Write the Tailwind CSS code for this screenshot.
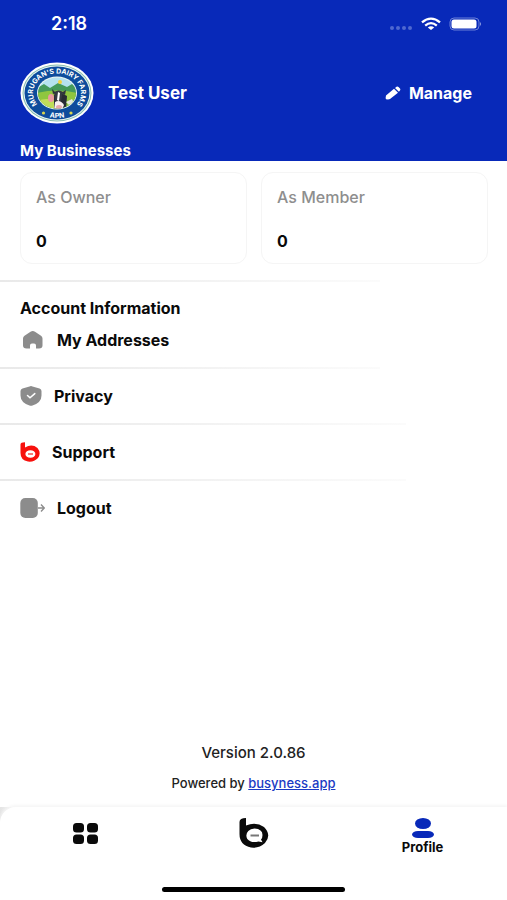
<!DOCTYPE html>
<html lang="en">
<head>
  <meta charset="UTF-8" />
  <meta name="viewport" content="width=device-width, initial-scale=1.0" />
  <title>Profile</title>
  <script src="https://cdn.jsdelivr.net/npm/@tailwindcss/browser@4"></script>
</head>
<body class="min-h-screen flex flex-col bg-white text-[#0a0a0a] text-base leading-5 font-['Inter',sans-serif]">

  <!-- Header -->
  <header class="bg-[#0829b9] text-white">
    <!-- Status bar -->
    <div class="flex items-center justify-between pl-[51px] pr-[26px] pt-3 h-9">
      <span class="text-lg font-semibold">2:18</span>
      <div class="flex items-center gap-2">
        <svg class="w-6 h-4" viewBox="0 0 24 16" fill="#4f68d0">
          <circle cx="3" cy="12" r="2" /><circle cx="9" cy="12" r="2" /><circle cx="15" cy="12" r="2" /><circle cx="21" cy="12" r="2" />
        </svg>
        <svg class="w-5 h-4" viewBox="0 0 20 16" fill="none" stroke="#fff" stroke-width="2.3">
          <path d="M1 6.4Q10-1.2 19 6.4" />
          <path d="M4.2 9.6Q10 4.6 15.8 9.6" />
          <path d="M10 14L6.8 11.6Q10 9 13.2 11.6Z" fill="#fff" stroke="none" />
        </svg>
        <svg class="w-8 h-4" viewBox="0 0 32 16" fill="none">
          <rect x="1" y="2" width="29" height="12" rx="4" stroke="#6b80d8" />
          <rect x="2.5" y="3.5" width="25" height="9" rx="2.5" fill="#fff" />
          <path d="M31 6Q33 8 31 10Z" fill="#8c9de2" />
        </svg>
      </div>
    </div>

    <!-- User -->
    <div class="flex items-center justify-between pl-5 pr-[35px] pt-[26px]">
      <div class="flex items-center gap-[14px]">
        <svg class="w-[74px] h-[62px]" viewBox="0 0 74 62" role="img" aria-label="Murugan's Dairy Farms APN">
          <defs>
            <path id="ringTop" d="M23.3 47A24 19.5 0 1 1 50.7 47" />
            <path id="ringBottom" d="M23 53.5Q37 58.5 51 53.5" />
            <clipPath id="scene"><ellipse cx="37" cy="31" rx="19" ry="15.5" /></clipPath>
          </defs>
          <ellipse cx="37" cy="31" rx="36.5" ry="30.5" fill="#fff" />
          <ellipse cx="37" cy="31" rx="34.5" ry="28.5" fill="#86bdb0" />
          <ellipse cx="37" cy="31" rx="33.5" ry="27.5" fill="#e9f5f4" />
          <ellipse cx="37" cy="31" rx="32.5" ry="26.5" fill="#0d4c9c" />
          <ellipse cx="37" cy="31" rx="20" ry="16.5" fill="#eaf5f2" />
          <g clip-path="url(#scene)">
            <path d="M17 14H57V48H17Z" fill="#b5e2f0" />
            <path d="M17 26L24 22L30 26L38 21L47 25L52 22L58 26V48H17Z" fill="#459b5b" />
            <path d="M17 31Q37 26 57 31V48H17Z" fill="#8fc63f" />
            <path d="M17 39Q29 34 42 42L39 48H17Z" fill="#bfdd59" />
            <circle cx="40" cy="20" r="2" fill="#f4d33f" />
            <path d="M34 33Q40 29 47 34L46 48H34Z" fill="#272b33" />
            <path d="M34 30Q39 27 43 30L41 39Q38 42 35 38Z" fill="#353941" />
            <path d="M38 30L40 31L39 39L37 38Z" fill="#fff" />
            <path d="M32 27L36 31L33 32ZM46 28L41 31L45 33Z" fill="#30343c" />
            <ellipse cx="31" cy="36" rx="3" ry="4" fill="#e99aa0" />
            <path d="M35 40Q40 37 44 43L42 48H34Z" fill="#f8efef" />
            <ellipse cx="39" cy="45" rx="3" ry="2" fill="#e9a9ac" />
            <path d="M46 40L52 37L54 41L49 43Z" fill="#e3e9dc" />
          </g>
          <g fill="#fff" font-family="Inter, sans-serif" font-weight="700" font-size="7" text-anchor="middle">
            <text><textPath href="#ringTop" startOffset="50%">MURUGAN'S DAIRY FARMS</textPath></text>
            <text><textPath href="#ringBottom" startOffset="50%">APN</textPath></text>
          </g>
          <circle cx="23.5" cy="51" r="1.6" fill="#d9d64e" /><circle cx="51" cy="51" r="1.6" fill="#d9d64e" />
        </svg>
        <h1 class="text-[17px] font-bold">Test User</h1>
      </div>
      <button type="button" class="flex items-center gap-2 font-bold">
        <svg class="w-4 h-4" viewBox="0 0 16 16" fill="#fff">
          <path d="M1 10.5L9 3.8L13 7.8L5 14Q4 14.7 1 14.3Q.2 13.7 1 10.5ZM10 3L11.500 1.8Q12.500 1.100 13.500 1.900L15 3.400Q15.800 4.400 15 5.400L13.900 6.800Z" />
        </svg>
        Manage
      </button>
    </div>

    <h2 class="px-5 pt-[17px] text-[15px] leading-5 font-bold">My Businesses</h2>
  </header>

  <main class="flex-1 flex flex-col">
    <!-- Business counts -->
    <section class="grid grid-cols-2 gap-[14px] pl-5 pr-[19px] pt-[11px] pb-4">
      <div class="border border-[#f5f5f5] rounded-xl px-[15px] pt-[14px] pb-3">
        <p class="text-[#8e8e8e] font-medium">As Owner</p>
        <p class="pt-6 font-bold">0</p>
      </div>
      <div class="border border-[#f5f5f5] rounded-xl px-[15px] pt-[14px] pb-3">
        <p class="text-[#8e8e8e] font-medium">As Member</p>
        <p class="pt-6 font-bold">0</p>
      </div>
    </section>
    <div class="h-[2px] w-3/4 bg-linear-to-r from-[#e9e9e9] to-[#fbfbfb]"></div>

    <!-- Account -->
    <section>
      <h2 class="px-5 pt-4 font-bold">Account Information</h2>
      <ul class="font-bold">
        <li>
          <a href="#addresses" class="flex items-center gap-3 px-5 pt-3 pb-[17px]">
            <svg class="w-[25px] h-5" viewBox="0 0 25 20" fill="#8c8c8c">
              <path d="M10.500 1.800Q12.800.3 15 1.800L21 5.700Q22.500 6.800 22.500 8.500V15.500Q22.500 18.500 19 18.500H16V15.500Q16 13.500 14 13.500H12Q10 13.500 10 15.500V18.500H6.500Q3 18.500 3 15.500V8.500Q3 6.800 4.500 5.700Z" />
            </svg>
            My Addresses
          </a>
          <div class="h-[2px] w-3/4 bg-linear-to-r from-[#e9e9e9] to-[#fbfbfb]"></div>
        </li>
        <li>
          <a href="#privacy" class="flex items-center gap-3 px-5 py-[17px]">
            <svg class="w-[22px] h-5" viewBox="0 0 22 20">
              <path d="M9.500.4Q11-.2 12.500.4L19.500 2.500Q21.500 3.200 21.500 5V9.500Q21.500 16.500 12.500 19.600Q11 20 9.500 19.600Q.5 16.500.5 9.500V5Q.5 3.200 2.500 2.500Z" fill="#8c8c8c" />
              <path d="M7.500 9.500L10 11.800L14.800 7.600" fill="none" stroke="#fff" stroke-width="1.500" stroke-linecap="round" />
            </svg>
            Privacy
          </a>
          <div class="h-[2px] w-4/5 bg-linear-to-r from-[#e9e9e9] to-[#fbfbfb]"></div>
        </li>
        <li>
          <a href="#support" class="flex items-center gap-3 px-5 py-[17px]">
            <svg class="w-5 h-5" viewBox="0 0 20 20" fill="none">
              <path d="M5 .3V5.500Q12 1.500 17.500 6Q21.500 11 18 16Q14 20.300 8 19.600Q.5 18.200.5 11V2.400Q.5.3 5 .3Z" fill="#f7110d" />
              <ellipse cx="10.400" cy="12" rx="5" ry="3.800" fill="#fff" />
              <path d="M8 12H13" stroke="#f7504d" stroke-width="1.500" />
            </svg>
            Support
          </a>
          <div class="h-[2px] w-4/5 bg-linear-to-r from-[#e9e9e9] to-[#fbfbfb]"></div>
        </li>
        <li>
          <button type="button" class="flex items-center gap-3 px-5 py-[17px] font-bold">
            <svg class="w-[25px] h-5" viewBox="0 0 25 20">
              <rect x=".3" y="0" width="17.500" height="20" rx="5" fill="#8c8c8c" />
              <path d="M18 10H24M21 6.500L24.300 10L21 13.500" fill="none" stroke="#8c8c8c" stroke-width="1.400" />
            </svg>
            Logout
          </button>
        </li>
      </ul>
    </section>

    <footer class="mt-auto pb-[14px] text-center font-medium text-[#222]">
      <p class="text-[15px] leading-5">Version 2.0.86</p>
      <p class="pt-[10px] text-[13px] leading-5">Powered by <a href="#busyness" class="text-[#1a3bc4] underline">busyness.app</a></p>
    </footer>
  </main>

  <!-- Tab bar -->
  <div class="bg-linear-to-r from-[#e4e4e4] from-0% to-white to-5%">
    <nav class="grid grid-cols-3 rounded-tl-2xl bg-white shadow-[0_-2px_3px_#f6f6f6] h-[76px] pt-[10px]">
      <a href="#home" aria-label="Home" class="flex justify-center pt-[6px]">
        <svg class="w-[26px] h-[22px]" viewBox="0 0 26 22" fill="#0a0a0a">
          <rect x="1" y="0" width="11" height="9.500" rx="3.500" /><rect x="15" y="0" width="11" height="9.500" rx="3.500" />
          <rect x="1" y="11.500" width="11" height="9.500" rx="3.500" /><rect x="15" y="11.500" width="11" height="9.500" rx="3.500" />
        </svg>
      </a>
      <a href="#chat" aria-label="Chat" class="flex justify-center">
        <svg class="w-[30px] h-8" viewBox="0 0 30 32">
          <path d="M7 1V8.500Q17 4.500 25 10Q33 18 26 26Q20 31.500 12 30.500Q.5 28 .5 17V5Q.5 1 7 1Z" fill="#0a0a0a" />
          <path d="M15.500 11.500Q23.500 12 23.500 18Q23.500 21 22 22.500L23.500 25.200L19.500 24.500Q12 26.500 8.300 22Q6 17.500 9.300 14Q11.500 11.500 15.500 11.500Z" fill="#fff" />
          <path d="M11.500 18.500H20" stroke="#777" stroke-width="2" />
        </svg>
      </a>
      <a href="#profile" aria-current="page" class="flex flex-col items-center text-[13px] leading-4 font-bold">
        <svg class="w-6 h-[22px]" viewBox="0 0 24 22" fill="#0829b9">
          <ellipse cx="12" cy="6.500" rx="8" ry="5.500" /><rect x="1" y="14" width="22" height="7" rx="6" ry="3.500" />
        </svg>
        Profile
      </a>
    </nav>
    <div class="flex justify-center bg-white pt-1 pb-2">
      <div class="h-[5px] w-[36%] rounded-full bg-black"></div>
    </div>
  </div>
</body>
</html>
